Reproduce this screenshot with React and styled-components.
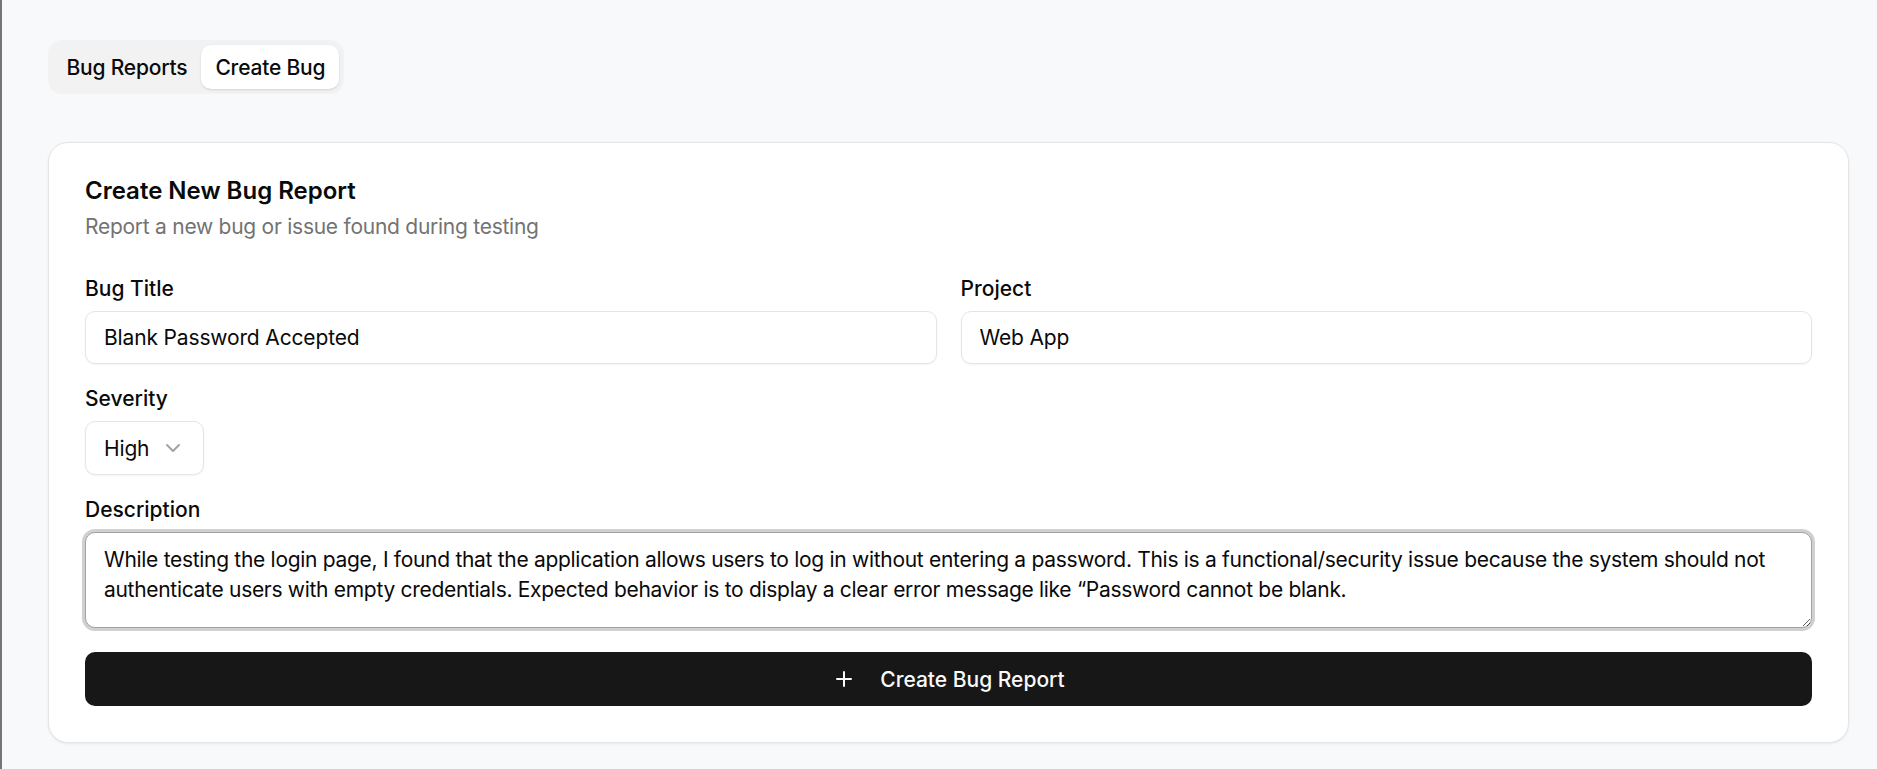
import React from 'react';
import styled, { createGlobalStyle, css } from 'styled-components';

const GlobalStyle = createGlobalStyle`
  html, body {
    margin: 0;
    padding: 0;
    background: #f8f9fa;
  }
  body {
    font-family: Inter, "Noto Sans", sans-serif;
    color: #0a0a0a;
    -webkit-font-smoothing: antialiased;
  }
  * {
    box-sizing: border-box;
  }
`;

const Page = styled.div`
  min-height: 769px;
  border-left: 2px solid #767676;
  padding: 40px 28px 27px 46px;
  display: flex;
  flex-direction: column;
  gap: 48px;
`;

const TabList = styled.div`
  display: inline-flex;
  align-self: flex-start;
  align-items: center;
  height: 54px;
  padding: 4.5px;
  border-radius: 14px;
  background: #f2f2f3;
`;

const Tab = styled.button`
  height: 44px;
  padding: 0 13px;
  border: 1px solid transparent;
  border-radius: 10px;
  font-family: inherit;
  font-size: 21px;
  font-weight: 500;
  letter-spacing: -0.2px;
  color: #0a0a0a;
  background: transparent;
  cursor: pointer;
  white-space: nowrap;
  ${props =>
    props.active &&
    css`
      background: #ffffff;
      box-shadow: 0 1px 3px rgba(0, 0, 0, 0.1), 0 1px 2px -1px rgba(0, 0, 0, 0.1);
    `};
`;

const Card = styled.div`
  background: #ffffff;
  border: 1px solid #e5e5e5;
  border-radius: 20px;
  box-shadow: 0 1px 3px rgba(0, 0, 0, 0.06), 0 1px 2px -1px rgba(0, 0, 0, 0.06);
  padding: 36px;
  display: flex;
  flex-direction: column;
  gap: 36px;
`;

const CardHeader = styled.div`
  display: flex;
  flex-direction: column;
  gap: 9px;
`;

const CardTitle = styled.h2`
  margin: 0;
  font-size: 24px;
  line-height: 24px;
  font-weight: 600;
  color: #0a0a0a;
`;

const CardDescription = styled.p`
  margin: 0;
  font-size: 21px;
  line-height: 30px;
  letter-spacing: -0.26px;
  color: #737373;
`;

const Form = styled.form`
  display: flex;
  flex-direction: column;
  gap: 24px;
`;

const Row = styled.div`
  display: grid;
  grid-template-columns: ${props => (props.cols === 2 ? '1fr 1fr' : '1fr')};
  gap: 24px;
`;

const Field = styled.div`
  display: flex;
  flex-direction: column;
  align-items: ${props => (props.fit ? 'flex-start' : 'stretch')};
  gap: 12px;
`;

const Label = styled.label`
  font-size: 21px;
  line-height: 21px;
  font-weight: 500;
  color: #0a0a0a;
`;

const Input = styled.input`
  height: 53px;
  width: 100%;
  padding: 0 18px;
  border: 1px solid #e5e5e5;
  border-radius: 10px;
  background: #ffffff;
  box-shadow: 0 1px 2px rgba(0, 0, 0, 0.05);
  font-family: inherit;
  font-size: 21px;
  letter-spacing: -0.15px;
  color: #0a0a0a;
  outline: none;
`;

const SelectTrigger = styled.button`
  height: 54px;
  display: inline-flex;
  align-items: center;
  gap: 12px;
  padding: 0 18px;
  border: 1px solid #e5e5e5;
  border-radius: 10px;
  background: #ffffff;
  box-shadow: 0 1px 2px rgba(0, 0, 0, 0.05);
  font-family: inherit;
  font-size: 21px;
  letter-spacing: -0.15px;
  color: #0a0a0a;
  cursor: pointer;

  svg {
    color: #a3a3a3;
  }
`;

const TextArea = styled.textarea`
  display: block;
  width: 100%;
  min-height: 96px;
  height: 96px;
  padding: 12px 18px;
  border: 1px solid ${props => (props.focused ? '#a1a1a1' : '#e5e5e5')};
  border-radius: 10px;
  background: #ffffff;
  box-shadow: ${props =>
    props.focused ? '0 0 0 3px rgba(161, 161, 161, 0.5)' : '0 1px 2px rgba(0,0,0,0.05)'};
  font-family: inherit;
  font-size: 21px;
  line-height: 30px;
  letter-spacing: -0.3px;
  color: #0a0a0a;
  outline: none;
  resize: vertical;
`;

const SubmitButton = styled.button`
  height: 54px;
  width: 100%;
  display: flex;
  align-items: center;
  justify-content: center;
  gap: 24px;
  border: 0;
  border-radius: 10px;
  background: #171717;
  color: #fafafa;
  font-family: inherit;
  font-size: 21px;
  font-weight: 500;
  cursor: pointer;
`;

const Chevron = () => (
  <svg width="24" height="24" viewBox="0 0 24 24" fill="none" stroke="currentColor" strokeWidth="2" strokeLinecap="round" strokeLinejoin="round">
    <path d="m6 9 6 6 6-6" />
  </svg>
);

const Plus = () => (
  <svg width="24" height="24" viewBox="0 0 24 24" fill="none" stroke="currentColor" strokeWidth="2" strokeLinecap="round" strokeLinejoin="round">
    <path d="M5 12h14" />
    <path d="M12 5v14" />
  </svg>
);

const description =
  'While testing the login page, I found that the application allows users to log in without entering a password. This is a functional/security issue because the system should not authenticate users with empty credentials. Expected behavior is to display a clear error message like \u201cPassword cannot be blank.';

export default function App() {
  return (
    <React.Fragment>
      <GlobalStyle />
      <Page>
        <TabList>
          <Tab>Bug Reports</Tab>
          <Tab active>Create Bug</Tab>
        </TabList>

        <Card>
          <CardHeader>
            <CardTitle>Create New Bug Report</CardTitle>
            <CardDescription>Report a new bug or issue found during testing</CardDescription>
          </CardHeader>

          <Form onSubmit={e => e.preventDefault()}>
            <Row cols={2}>
              <Field>
                <Label>Bug Title</Label>
                <Input defaultValue="Blank Password Accepted" />
              </Field>
              <Field>
                <Label>Project</Label>
                <Input defaultValue="Web App" />
              </Field>
            </Row>

            <Field fit>
              <Label>Severity</Label>
              <SelectTrigger type="button">
                <span>High</span>
                <Chevron />
              </SelectTrigger>
            </Field>

            <Field>
              <Label>Description</Label>
              <TextArea focused defaultValue={description} />
            </Field>

            <SubmitButton type="submit">
              <Plus />
              <span>Create Bug Report</span>
            </SubmitButton>
          </Form>
        </Card>
      </Page>
    </React.Fragment>
  );
}
